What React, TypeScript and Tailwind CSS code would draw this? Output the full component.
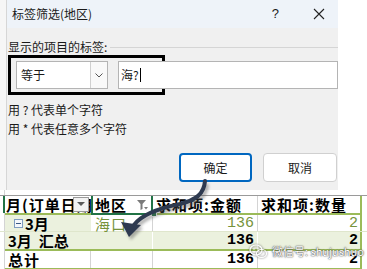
import React from "react";

const cjk = "font-['Noto_Sans_CJK_SC','Noto_Sans',sans-serif]";

function Grip() {
  return (
    <span className="inline-flex items-center justify-center w-[9px] h-[9px] border border-[#7f9cc0] bg-[#f4f7fb] mr-[2px]">
      <span className="block w-[5px] h-[1px] bg-[#3b5a85]" />
    </span>
  );
}

export default function App() {
  return (
    <div className={`relative w-[367px] h-[269px] overflow-hidden bg-white ${cjk}`}>
      {/* Dialog area */}
      <div className="flex h-[190px]">
        <div className="w-[7px] bg-[#f6f6f6] border-r border-[#d6d6d6]" />
        <div className="w-[331px] flex flex-col bg-[#f0f0f0]">
          <div className="h-[28px] bg-[#eef3f9] flex items-center pl-[5px] pr-[12px] text-[12px] text-[#1a1a1a]">
            <span>标签筛选(地区)</span>
            <span className="ml-auto mr-[34px] text-[13px] font-['Liberation_Sans',sans-serif]">?</span>
            <svg width="12" height="12" viewBox="0 0 12 12" className="mr-[1px]">
              <path d="M1 1 L11 11 M11 1 L1 11" stroke="#222" strokeWidth="1.1" />
            </svg>
          </div>
          <div className="flex flex-col pl-[1px] text-[12px] text-[#1a1a1a]">
            <div className="flex items-center h-[18px] mt-[10px]">
              <span>显示的项目的标签:</span>
              <div className="flex-1 h-px bg-[#d5d5d5] ml-[3px] mt-[1px]" />
            </div>
            <div className="flex items-center h-[40px] mt-[-1px]">
              <div className="w-[157px] h-[40px] border-[3px] border-black flex items-center pl-[5px]">
                <div className="w-[92px] h-[28px] bg-white border border-[#b4b4b4] flex items-center">
                  <span className="pl-[4px] flex-1">等于</span>
                  <div className="w-[17px] h-full border-l border-[#d0d0d0] bg-[#f9f9f9] flex items-center justify-center">
                    <svg width="8" height="5" viewBox="0 0 8 5">
                      <path d="M0.5 0.5 L4 4 L7.5 0.5" stroke="#555" strokeWidth="1" fill="none" />
                    </svg>
                  </div>
                </div>
                <div className="w-[7px]" />
              </div>
              <div className="flex-1 h-[28px] bg-white border border-[#b4b4b4] ml-[-47px] flex items-center pl-[2px]">
                <span>海?</span>
                <span className="block w-px h-[14px] bg-black ml-[1px]" />
              </div>
            </div>
            <div className="h-[20px] flex items-center mt-[5px]">用 ? 代表单个字符</div>
            <div className="h-[20px] flex items-center mt-[-1px]">用 * 代表任意多个字符</div>
            <div className="flex mt-[14px]">
              <div className="ml-[171px] w-[73px] h-[29px] rounded-[4px] border-2 border-[#0067c0] bg-white flex items-center justify-center">确定</div>
              <div className="ml-[11px] w-[74px] h-[29px] rounded-[4px] border border-[#d0d0d0] bg-white flex items-center justify-center">取消</div>
            </div>
          </div>
        </div>
        <div className="flex-1 bg-white" />
      </div>

      {/* Sheet */}
      <div className="h-[5px] grid grid-cols-[5px_86px_62px_105px_104px_5px]">
        <div className="border-r border-[#d4d4d4]" />
      </div>
      <div className="grid grid-cols-[5px_86px_62px_105px_104px_5px] h-[18px] border-t border-[#9a9a9a] text-[15px] font-bold text-black leading-[17px]">
        <div className="border-r-2 border-[#217346]" />
        <div className="flex items-center pl-[1px] overflow-hidden relative">
          <span className="whitespace-nowrap tracking-[1px]">月(订单日期)</span>
          <div className="absolute right-[2px] top-[1px] w-[16px] h-[15px] border border-[#9a9a9a] bg-[#f2f2f2] flex items-center justify-center">
            <svg width="8" height="5" viewBox="0 0 8 5"><path d="M0 0 H8 L4 4 Z" fill="#5a5a5a" /></svg>
          </div>
        </div>
        <div className="relative flex items-center pl-[2px] border-x-2 border-[#217346] tracking-[1px]">
          <span>地区</span>
          <div className="absolute right-[1px] top-[1px] w-[15px] h-[15px] flex items-center justify-center">
            <svg width="13" height="13" viewBox="0 0 13 13">
              <path d="M1 2 H10 L6.5 6 V11 L4.5 12 V6 Z" fill="#7a7a7a" />
              <path d="M8 9 H12 L10 11.5 Z" fill="#7a7a7a" />
            </svg>
          </div>
        </div>
        <div className="flex items-center pl-[3px] border-r border-[#d4d4d4] whitespace-nowrap tracking-[1px]">求和项:金额</div>
        <div className="flex items-center pl-[3px] border-r-2 border-[#9bbb59] whitespace-nowrap tracking-[1px]">求和项:数量</div>
        <div />
      </div>
      <div className="grid grid-cols-[5px_86px_62px_105px_104px_5px] h-[2px]">
        <div className="border-r border-[#d4d4d4]" />
        <div className="bg-[#9bbb59]" />
        <div className="bg-[#217346] relative">
          <div className="absolute right-[-4px] top-[-2px] w-[6px] h-[6px] bg-[#217346] border border-white" />
        </div>
        <div className="bg-[#9bbb59]" />
        <div className="bg-[#9bbb59]" />
        <div />
      </div>
      {/* row 1 */}
      <div className="grid grid-cols-[5px_86px_62px_105px_104px_5px] h-[16px] text-[15px] leading-[15px]">
        <div className="border-r border-[#d4d4d4]" />
        <div className="bg-[#ebf1de] flex items-center pl-[9px] font-bold">
          <Grip />
          <span>3月</span>
        </div>
        <div className="bg-white flex items-center pl-[4px] text-[#76933c] border-r border-[#d4d4d4] tracking-[1px]">海口</div>
        <div className="bg-white flex items-center justify-end pr-[3px] text-[#76933c] font-['Liberation_Mono',monospace] border-r border-[#d4d4d4]">136</div>
        <div className="bg-white flex items-center justify-end pr-[2px] text-[#76933c] font-['Liberation_Mono',monospace] border-r-2 border-[#9bbb59]">2</div>
        <div />
      </div>
      {/* row 2 */}
      <div className="grid grid-cols-[5px_86px_62px_105px_104px_5px] h-[18px] text-[15px] leading-[16px] font-bold border-t border-[#dfe6cc]">
        <div className="border-r border-[#d4d4d4]" />
        <div className="bg-[#ebf1de] flex items-center pl-[3px] whitespace-nowrap">3月&nbsp;&nbsp;汇总</div>
        <div className="bg-[#ebf1de] border-r border-white" />
        <div className="bg-[#ebf1de] flex items-center justify-end pr-[3px] font-['Liberation_Mono',monospace] border-r border-white">136</div>
        <div className="bg-[#ebf1de] flex items-center justify-end pr-[2px] font-['Liberation_Mono',monospace] border-r-2 border-[#9bbb59]">2</div>
        <div />
      </div>
      <div className="grid grid-cols-[5px_86px_62px_105px_104px_5px] h-[2px]">
        <div className="border-r border-[#d4d4d4]" />
        <div className="col-span-4 bg-[#9bbb59]" />
        <div />
      </div>
      {/* row 3 */}
      <div className="grid grid-cols-[5px_86px_62px_105px_104px_5px] h-[17px] text-[15px] leading-[16px] font-bold">
        <div className="border-r border-[#d4d4d4]" />
        <div className="flex items-center pl-[3px] border-r border-[#d4d4d4] tracking-[1px]">总计</div>
        <div className="border-r border-[#d4d4d4]" />
        <div className="flex items-center justify-end pr-[3px] font-['Liberation_Mono',monospace] border-r border-[#d4d4d4]">136</div>
        <div className="flex items-center justify-end pr-[2px] font-['Liberation_Mono',monospace] border-r-2 border-[#9bbb59]">2</div>
        <div />
      </div>
      <div className="grid grid-cols-[5px_86px_62px_105px_104px_5px] h-[2px]">
        <div className="border-r border-[#d4d4d4]" />
        <div className="col-span-4 bg-[#9bbb59]" />
        <div />
      </div>

      {/* Arrow overlay */}
      <svg className="absolute inset-0 pointer-events-none" width="367" height="269" viewBox="0 0 367 269">
        <defs>
          <filter id="sh" x="-20%" y="-20%" width="140%" height="140%">
            <feGaussianBlur stdDeviation="1.6" />
          </filter>
        </defs>
        <g opacity="0.45" filter="url(#sh)" transform="translate(2,3)">
          <path d="M205 181 C204 194, 196 200, 180 204 C160 208, 142 214, 134 225" stroke="#555" strokeWidth="4" fill="none" />
          <path d="M129 237 L121 222 L141 225 Z" fill="#555" />
        </g>
        <path d="M205 181 C204 194, 196 200, 180 204 C160 208, 142 214, 134 225" stroke="#2e3a50" strokeWidth="4" fill="none" strokeLinecap="round" />
        <path d="M129 237 L121 222 L141 225 Z" fill="#2e3a50" />
      </svg>

      {/* Watermark */}
      <div className="absolute left-[249px] top-[243px] flex items-center gap-[4px] pointer-events-none">
        <svg width="19" height="15" viewBox="0 0 19 15" style={{ filter: "drop-shadow(0 0 1px rgba(0,0,0,0.6))" }}>
          <ellipse cx="7" cy="6" rx="6" ry="5" fill="none" stroke="#fff" strokeWidth="1.2" />
          <ellipse cx="12.5" cy="9.5" rx="5" ry="4" fill="none" stroke="#fff" strokeWidth="1.2" />
          <circle cx="5" cy="5" r="0.8" fill="#fff" />
          <circle cx="9" cy="5" r="0.8" fill="#fff" />
        </svg>
        <span
          className="text-[11px] text-white whitespace-nowrap"
          style={{ textShadow: "0 0 1px #333, 0 0 2px #555" }}
        >
          微信号: shujushuo
        </span>
      </div>
    </div>
  );
}
